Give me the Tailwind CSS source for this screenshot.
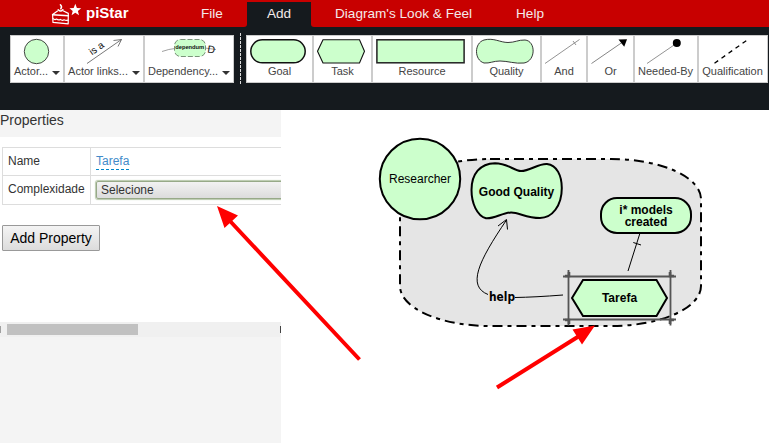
<!DOCTYPE html>
<html lang="en">
<head>
<meta charset="utf-8">
<title>piStar</title>
<script src="https://cdn.jsdelivr.net/npm/@tailwindcss/browser@4"></script>
</head>
<body class="relative flex h-[443px] w-[769px] flex-col overflow-hidden bg-white font-['Liberation_Sans',Arial,sans-serif] text-[#333]">
<header class="h-[110px] shrink-0 bg-[#151a1e]">
  <nav class="flex h-[27px] text-[13.6px] leading-[27px] text-[#f4eaea]">
    <div class="flex w-[247px] rounded-br-[3px] bg-[#c80000]">
      <svg class="ml-[50px] h-[27px] w-[33px] shrink-0" viewBox="50 0 33 27" fill="none" stroke="#fff" stroke-width="1.2" stroke-linejoin="round" stroke-linecap="round">
        <path d="M52.6 14.6 L57.5 11 M63 10.8 L68.3 13.4 L68.2 23.8 L53 22.4 L52.6 14.6" />
        <path d="M52.6 14.8 L68.3 15.8" stroke-width="1.6"/>
        <path d="M53 18.6 q1.8 1.6 3.5 .4 q2 1.6 3.8 .4 q2 1.6 3.8 .4 q2 1.2 4 .2"/>
        <path d="M58.2 9.8 q2.4 2.6 4.6 -.1 M60.8 8.8 Q62.4 6.8 60.4 4.7" stroke-width="1.5"/>
        <path d="M75.3 3.8 L76.9 8 L81.2 8.2 L77.9 10.9 L79 15.2 L75.3 12.7 L71.6 15.2 L72.7 10.9 L69.4 8.2 L73.7 8 Z" fill="#fff" stroke="none"/>
      </svg>
      <b class="ml-[3px] w-[102px] text-[15px] leading-[26px] text-white">piStar</b>
      <span class="ml-[13px]">File</span>
    </div>
    <div class="flex w-[64px] flex-col bg-[#c80000]"><span class="mt-[2px] h-[25px] bg-[#151a1e] text-center leading-[23px]">Add</span></div>
    <div class="flex flex-1 rounded-bl-[3px] bg-[#c80000]"><span class="ml-6 w-[181px]">Diagram's Look &amp; Feel</span><span>Help</span></div>
  </nav>
  <div class="mt-[6px] flex h-[52px] items-center text-[11px] leading-[13px] text-[#444]">
    <div class="ml-[10px] flex h-[48px]">
      <button class="flex w-[54px] flex-col items-center border border-[#ccc] bg-white">
        <svg class="mt-[2px] h-[27px] w-[52px] shrink-0" viewBox="11 38 52 27"><circle cx="36.5" cy="51.5" r="12.2" fill="#cfc" stroke="#333" stroke-width=".9"/></svg>
        <span class="flex items-center gap-[4px]">Actor...<i class="mt-0.5 border-x-4 border-t-4 border-x-transparent border-t-[#333]"></i></span>
      </button>
      <button class="flex w-[80px] flex-col items-center border border-[#ccc] bg-white">
        <svg class="mt-[2px] h-[27px] w-[78px] shrink-0" viewBox="65 38 78 27"><path d="M87 63.5 L121.5 39.5 M113.5 40.5 L121.5 39.5 L118 46.5" fill="none" stroke="#555" stroke-width=".8"/><text x="92" y="55.5" transform="rotate(-35 92 55.5)" font-size="10" fill="#111">is a</text></svg>
        <span class="flex items-center gap-[4px] whitespace-nowrap">Actor links...<i class="mt-0.5 border-x-4 border-t-4 border-x-transparent border-t-[#333]"></i></span>
      </button>
      <button class="flex w-[90px] flex-col items-center border border-[#ccc] bg-white">
        <svg class="mt-[2px] h-[27px] w-[88px] shrink-0" viewBox="145 38 88 27"><path d="M162 51.5 Q169 49 175 48.5 M205 48 L216 49.5" fill="none" stroke="#888" stroke-width=".8"/><rect x="174.5" y="39.5" width="31" height="17" rx="6" fill="#cfc" stroke="#7a937a" stroke-dasharray="5 2"/><text x="189.7" y="49" text-anchor="middle" font-size="5.6" font-weight="bold" fill="#111" textLength="29" lengthAdjust="spacingAndGlyphs">dependum</text><text x="207.5" y="53" font-size="10.5" transform="rotate(8 210 49)" fill="#111">D</text></svg>
        <span class="flex items-center gap-[4px] whitespace-nowrap">Dependency...<i class="mt-0.5 border-x-4 border-t-4 border-x-transparent border-t-[#333]"></i></span>
      </button>
    </div>
    <div class="mr-[5px] ml-[6px] h-[52px] w-px bg-[repeating-linear-gradient(to_bottom,#ddd_0_3px,transparent_3px_4px)]"></div>
    <div class="flex h-[48px]">
      <button class="flex w-[67px] flex-col items-center border border-[#ccc] bg-white">
        <svg class="mt-[2px] h-[27px] w-[65px] shrink-0" viewBox="247 38 65 27"><rect x="250.8" y="39.8" width="54.4" height="23" rx="11.5" fill="#cfc" stroke="#111" stroke-width="1.5"/></svg><span>Goal</span>
      </button>
      <button class="flex w-[59px] flex-col items-center border border-[#ccc] bg-white">
        <svg class="mt-[2px] h-[27px] w-[57px] shrink-0" viewBox="314 38 57 27"><path d="M317.5 51.3 L323 39.7 H359.5 L364.5 51.3 L359.5 63 H323 Z" fill="#cfc" stroke="#111" stroke-width="1.1"/></svg><span>Task</span>
      </button>
      <button class="flex w-[100px] flex-col items-center border border-[#ccc] bg-white">
        <svg class="mt-[2px] h-[27px] w-[98px] shrink-0" viewBox="373 38 98 27"><rect x="376.9" y="39.8" width="87.2" height="23" fill="#cfc" stroke="#222" stroke-width="1.5"/></svg><span>Resource</span>
      </button>
      <button class="flex w-[69px] flex-col items-center border border-[#ccc] bg-white">
        <svg class="mt-[2px] h-[27px] w-[67px] shrink-0" viewBox="473 38 67 27"><path d="M484 40 C494 37.5 500 42.5 508 42.5 C515 42.5 518 39.8 525 40 C536 41 536 61 524 63 C515 64 508 61 500 61 C493 61 490 63.5 484 63 C474 60 474 43 484 40 Z" fill="#cfc" stroke="#222" stroke-width=".9"/></svg><span>Quality</span>
      </button>
      <button class="flex w-[46px] flex-col items-center border border-[#ccc] bg-white">
        <svg class="mt-[2px] h-[27px] w-[44px] shrink-0" viewBox="542 38 44 27"><path d="M545 63.5 L579.5 39.5 M573 41 L576 45" fill="none" stroke="#777" stroke-width=".8"/></svg><span>And</span>
      </button>
      <button class="flex w-[47px] flex-col items-center border border-[#ccc] bg-white">
        <svg class="mt-[2px] h-[27px] w-[45px] shrink-0" viewBox="588 38 45 27"><path d="M591.5 63.5 L622 42.5" stroke="#666" stroke-width=".8"/><path d="M618.5 39.6 L627 39.2 L624.2 46.8 Z"/></svg><span>Or</span>
      </button>
      <button class="flex w-[64px] flex-col items-center border border-[#ccc] bg-white">
        <svg class="mt-[2px] h-[27px] w-[62px] shrink-0" viewBox="635 38 62 27"><path d="M647 63.5 L677 43" stroke="#777" stroke-width=".8"/><circle cx="676.8" cy="43" r="4"/></svg><span class="-ml-px whitespace-nowrap">Needed-By</span>
      </button>
      <button class="flex w-[70px] flex-col items-center border border-[#ccc] bg-white">
        <svg class="mt-[2px] h-[27px] w-[68px] shrink-0" viewBox="699 38 68 27"><path d="M714.5 63.2 L746.5 40.5" stroke="#000" stroke-width="1.3" stroke-dasharray="4.5 4.1"/></svg><span class="-ml-px whitespace-nowrap">Qualification</span>
      </button>
    </div>
  </div>
</header>
<main class="flex h-[333px]">
  <aside class="flex w-[281px] shrink-0 flex-col overflow-hidden bg-[#f4f4f4]">
    <h2 class="h-[27px] shrink-0 text-[14px] leading-[20px]">Properties</h2>
    <section class="h-[185px] shrink-0 overflow-hidden bg-white pt-[10px] pl-[2px] text-[12px]">
      <div class="grid h-[58px] w-[400px] grid-cols-[88px_1fr] grid-rows-[28px_29px] border-t border-l border-[#ddd]">
        <div class="border-r border-b border-[#ddd] pt-[5px] pl-[5px] leading-4">Name</div>
        <div class="border-b border-[#ddd] pt-[4px] pl-[5px]"><a class="inline-block h-[17px] border-b border-dashed border-[#08c] leading-4 text-[#428bca]">Tarefa</a></div>
        <div class="border-r border-b border-[#ddd] pt-[5px] pl-[5px] leading-4 whitespace-nowrap">Complexidade</div>
        <div class="border-b border-[#ddd] pt-[5px] pl-[5px]"><div class="h-[18px] rounded-[2px] border border-[#97a988] bg-linear-to-b from-[#f2f2f2] to-[#dcdcdc] pl-[4px] leading-[17px] shadow-[0_0_1px_1px_#b9c9ac]">Selecione</div></div>
      </div>
      <button class="mt-[20px] block h-[26px] w-[98px] rounded-[1px] border border-[#999] bg-linear-to-b from-[#f4f4f4] to-[#dcdcdc] text-[14px] leading-[24px] whitespace-nowrap text-black">Add Property</button>
    </section>
    <div class="flex h-[15px] shrink-0 items-center bg-[#f0f0f0]"><i class="h-[7px] w-px bg-[#a0a0a0]"></i><i class="ml-[6px] h-[11px] w-[131px] bg-[#c1c1c1]"></i><i class="ml-auto h-[7px] w-px bg-[#444]"></i></div>
  </aside>
  <svg class="h-[333px] w-[488px] shrink-0" viewBox="281 110 488 333" fill="none" stroke="#000">
    <path d="M490 159 H611 A90 40 0 0 1 701 199 V286 A90 40 0 0 1 611 326 H490 A90 40 0 0 1 400 286 V199 A90 40 0 0 1 490 159 Z" fill="#e5e5e5" stroke-width="2" stroke-dasharray="10 5 4 5"/>
    <circle cx="420" cy="179" r="40.2" fill="#cfc" stroke-width="2"/>
    <path d="M495 163.2 C508 163.2 514 171 521 171 C530 171 538 163.5 547 164 C557 165 561.8 176 561.8 188 C561.8 206 552 218 540 218 C526 218 519 212.3 511 212.5 C502 213 494 219 486 218.3 C477 216 471.5 203 471.5 190 C471.5 174 480 163.5 495 163.2 Z" fill="#cfc" stroke-width="2"/>
    <rect x="601" y="198" width="90" height="35" rx="16" fill="#cfc" stroke-width="2"/>
    <path d="M640 233 L628 271 M633.3 242.5 L641 245" stroke-width="1"/>
    <path d="M488 294.5 C467 286 478 262 506.5 220 M498 226 L506.5 219.5 L507.5 229.5 M515 297.5 Q535 297.2 563 295" stroke-width="1"/>
    <path d="M572 298 L583 280 H656.5 L667 298 L656.5 316 H583 Z" fill="#cfc" stroke-width="2"/>
    <g stroke="#555"><path d="M563 276.5 H676 M563 319.5 H676 M568.5 270 V325.5 M670.5 270 V325.5" stroke-width="1.8"/><path d="M565 276 H569 V272 M674 276 H670 V272 M565 320 H569 V324 M674 320 H670 V324" stroke-width="2.6"/></g>
    <g fill="#000" stroke="none" font-size="12" text-anchor="middle">
      <text x="420" y="183">Researcher</text>
      <g font-weight="bold"><text x="516.5" y="196">Good Quality</text><text x="646" y="214"><tspan>i* models</tspan><tspan x="646" dy="12">created</tspan></text><text x="619.5" y="302">Tarefa</text>
      <text x="502" y="301" font-family="'DejaVu Sans',sans-serif" font-size="12" textLength="26" lengthAdjust="spacingAndGlyphs">help</text></g>
    </g>
  </svg>
</main>
<svg class="pointer-events-none absolute inset-0 h-[443px] w-[769px]" viewBox="0 0 769 443" fill="#f00" stroke="#f00" stroke-width="4">
  <path d="M359.5 359.5 L230 221 M497 387.5 L580 335.5"/>
  <path d="M217 206 L238 215.5 L224.5 228 Z M595 325.5 L572.5 329.5 L582 344.5 Z" stroke="none"/>
</svg>
</body>
</html>
